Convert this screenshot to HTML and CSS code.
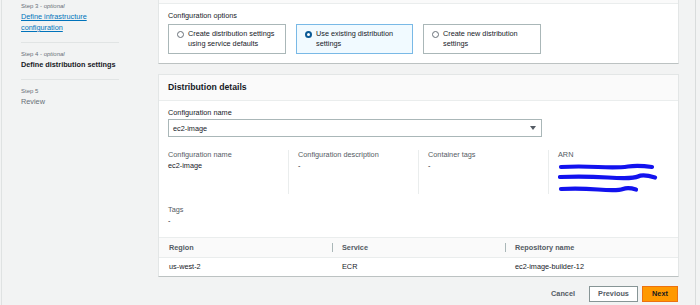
FILE: index.html
```html
<!DOCTYPE html>
<html lang="en">
<head>
  <meta charset="utf-8">
  <title>Define distribution settings</title>
  <link rel="stylesheet" href="styles.css">
</head>
<body>
  <div class="app">
    <nav class="steps">
      <div class="step">
        <div class="step-num">Step 3 - <i>optional</i></div>
        <a class="step-title step-link" href="#">Define infrastructure configuration</a>
      </div>
      <div class="step">
        <div class="step-num">Step 4 - <i>optional</i></div>
        <div class="step-title step-current">Define distribution settings</div>
      </div>
      <div class="step">
        <div class="step-num">Step 5</div>
        <div class="step-title step-disabled">Review</div>
      </div>
    </nav>

    <main class="content">
      <!-- card above is scrolled off, only its bottom part shows -->
      <section class="card card-top">
        <div class="card-cut"></div>
        <div class="card-body">
          <div class="field-label">Configuration options</div>
          <div class="tiles">
            <label class="tile"><span class="radio"></span><span>Create distribution settings using service defaults</span></label>
            <label class="tile is-checked"><span class="radio"></span><span>Use existing distribution settings</span></label>
            <label class="tile"><span class="radio"></span><span>Create new distribution settings</span></label>
          </div>
        </div>
      </section>

      <section class="card card-details">
        <header class="card-header">
          <h2>Distribution details</h2>
        </header>
        <div class="card-body">
          <div class="field-label">Configuration name</div>
          <div class="select">
            <span>ec2-image</span>
            <svg width="6" height="4" viewBox="0 0 6 4"><path d="M0 0H6L3 4Z" fill="#545b64"/></svg>
          </div>

          <div class="kv">
            <div class="kv-col">
              <div class="kv-label">Configuration name</div>
              <div class="kv-value">ec2-image</div>
            </div>
            <div class="kv-col">
              <div class="kv-label">Configuration description</div>
              <div class="kv-value">-</div>
            </div>
            <div class="kv-col">
              <div class="kv-label">Container tags</div>
              <div class="kv-value">-</div>
            </div>
            <div class="kv-col">
              <div class="kv-label">ARN</div>
              <svg class="redacted" width="100" height="34" viewBox="0 0 100 34">
                <path d="M3 7 Q20 6 40 7 T70 6.5 T94 7" />
                <path d="M2 17 Q25 16 50 17.5 T80 16.5 T97 17.5" />
                <path d="M3 29 Q20 28 40 29.5 T65 29 T78 29.5" />
              </svg>
            </div>
          </div>

          <div class="tags">
            <div class="kv-label">Tags</div>
            <div class="kv-value">-</div>
          </div>
        </div>

        <table class="repo-table">
          <thead>
            <tr>
              <th>Region</th>
              <th><span class="sep"></span>Service</th>
              <th><span class="sep"></span>Repository name</th>
            </tr>
          </thead>
          <tbody>
            <tr>
              <td>us-west-2</td>
              <td>ECR</td>
              <td>ec2-image-builder-12</td>
            </tr>
          </tbody>
        </table>
      </section>

      <div class="actions">
        <button class="btn btn-link">Cancel</button>
        <button class="btn btn-secondary">Previous</button>
        <button class="btn btn-primary">Next</button>
      </div>
    </main>

    <div class="gutter"></div>
    <aside class="panel-edge"></aside>
  </div>
</body>
</html>
```

FILE: styles.css
```css
* {
    box-sizing: border-box;
    margin: 0;
    padding: 0;
}
body {
    background: #f2f3f3;
    font-family: "Liberation Sans", Arial, sans-serif;
    font-size: 7.3px;
    color: #16191f;
}
.app {
    display: flex;
    height: 305px;
    margin-left: 1px;
    border-left: 1px solid #dfe2e2;
    overflow: hidden;
}

/* left wizard steps */
.steps {
    width: 156px;
    flex-shrink: 0;
    padding-left: 19px;
}
.step {
    width: 98px;
    padding: 7px 0 9px;
    border-bottom: 1px solid #e1e4e4;
}
.step:first-child {
    padding-top: 2px;
}
.step:last-child {
    border-bottom: 0;
}
.step-num {
    font-size: 6px;
    line-height: 8px;
    color: #687078;
}
.step-title {
    display: block;
    margin-top: 1px;
    line-height: 11px;
}
.step-link {
    color: #0073bb;
    text-decoration: underline;
}
.step-current {
    font-weight: bold;
}
.step-disabled {
    color: #687078;
}

/* main column */
.content {
    width: 521px;
    flex-shrink: 0;
}
.card {
    background: #fff;
    border: 1px solid #e3e6e6;
    border-bottom-color: #bcc2c2;
}
.card-top {
    margin-top: -1px;
}
.card-cut {
    height: 4px;
    background: #fafafa;
    border-bottom: 1px solid #eaeded;
}
.card-body {
    padding: 7px 9px 9px;
}
.field-label {
    line-height: 10px;
    margin-bottom: 3px;
}
.tiles {
    display: grid;
    grid-template-columns: 118px 117px 118px;
    gap: 10px;
}
.tile {
    display: flex;
    gap: 4px;
    height: 30px;
    padding: 4px 8px;
    border: 1px solid #aab7b8;
    line-height: 10px;
}
.tile.is-checked {
    background: #f1faff;
    border-color: #79b9e6;
}
.radio {
    width: 7px;
    height: 7px;
    margin-top: 1.5px;
    flex-shrink: 0;
    border: 1px solid #687078;
    border-radius: 50%;
    background: #fff;
}
.tile.is-checked .radio {
    border: 2px solid #0a5a96;
}

.card-details {
    margin-top: 10px;
}
.card-header {
    height: 26px;
    padding: 0 9px;
    background: #fafafa;
    border-bottom: 1px solid #eaeded;
}
.card-header h2 {
    font-size: 8.7px;
    line-height: 25px;
    font-weight: bold;
}
.card-details .card-body {
    padding: 7px 9px 10px;
}
.card-details .field-label {
    margin-bottom: 1px;
}
.select {
    width: 374px;
    height: 18px;
    display: flex;
    align-items: center;
    justify-content: space-between;
    padding: 0 5px 0 4px;
    border: 1px solid #aab7b8;
}

.kv {
    display: grid;
    grid-template-columns: 120px 130px 130px 1fr;
    margin-top: 13px;
}
.kv-col + .kv-col {
    border-left: 1px solid #eaeded;
    padding-left: 9px;
}
.kv-label {
    line-height: 10px;
    color: #545b64;
}
.kv-value {
    line-height: 12px;
}
.redacted {
    display: block;
}
.redacted path {
    fill: none;
    stroke: #1212ee;
    stroke-width: 4.2;
    stroke-linecap: round;
}
.tags {
    margin-top: 11px;
}

.repo-table {
    width: 100%;
    table-layout: fixed;
    border-collapse: collapse;
}
.repo-table th {
    height: 20px;
    padding-left: 10px;
    text-align: left;
    font-weight: bold;
    color: #545b64;
    background: #fafafa;
    border-top: 1px solid #eaeded;
    border-bottom: 1px solid #eaeded;
}
.repo-table th + th {
    padding-left: 0;
}
.sep {
    display: inline-block;
    width: 10px;
    height: 9px;
    vertical-align: middle;
    border-left: 1px solid #aab7b8;
}
.repo-table td {
    height: 18px;
    padding-left: 10px;
}

.actions {
    display: flex;
    justify-content: flex-end;
    align-items: center;
    margin-top: 9px;
    padding-right: 1px;
}
.btn {
    height: 16px;
    font-family: inherit;
    font-size: 7.3px;
    font-weight: bold;
    border: 1px solid transparent;
    background: none;
    cursor: pointer;
}
.btn-link {
    color: #545b64;
    margin-right: 13px;
}
.btn-secondary {
    width: 49px;
    background: #fff;
    border-color: #879596;
    color: #545b64;
}
.btn-primary {
    width: 36px;
    margin-left: 4px;
    background: #ff9900;
    border-color: #ec7211;
    color: #16191f;
}

.gutter {
    width: 16px;
    flex-shrink: 0;
}
.panel-edge {
    flex: 1;
    border-left: 1px solid #d9dcdc;
}
```
